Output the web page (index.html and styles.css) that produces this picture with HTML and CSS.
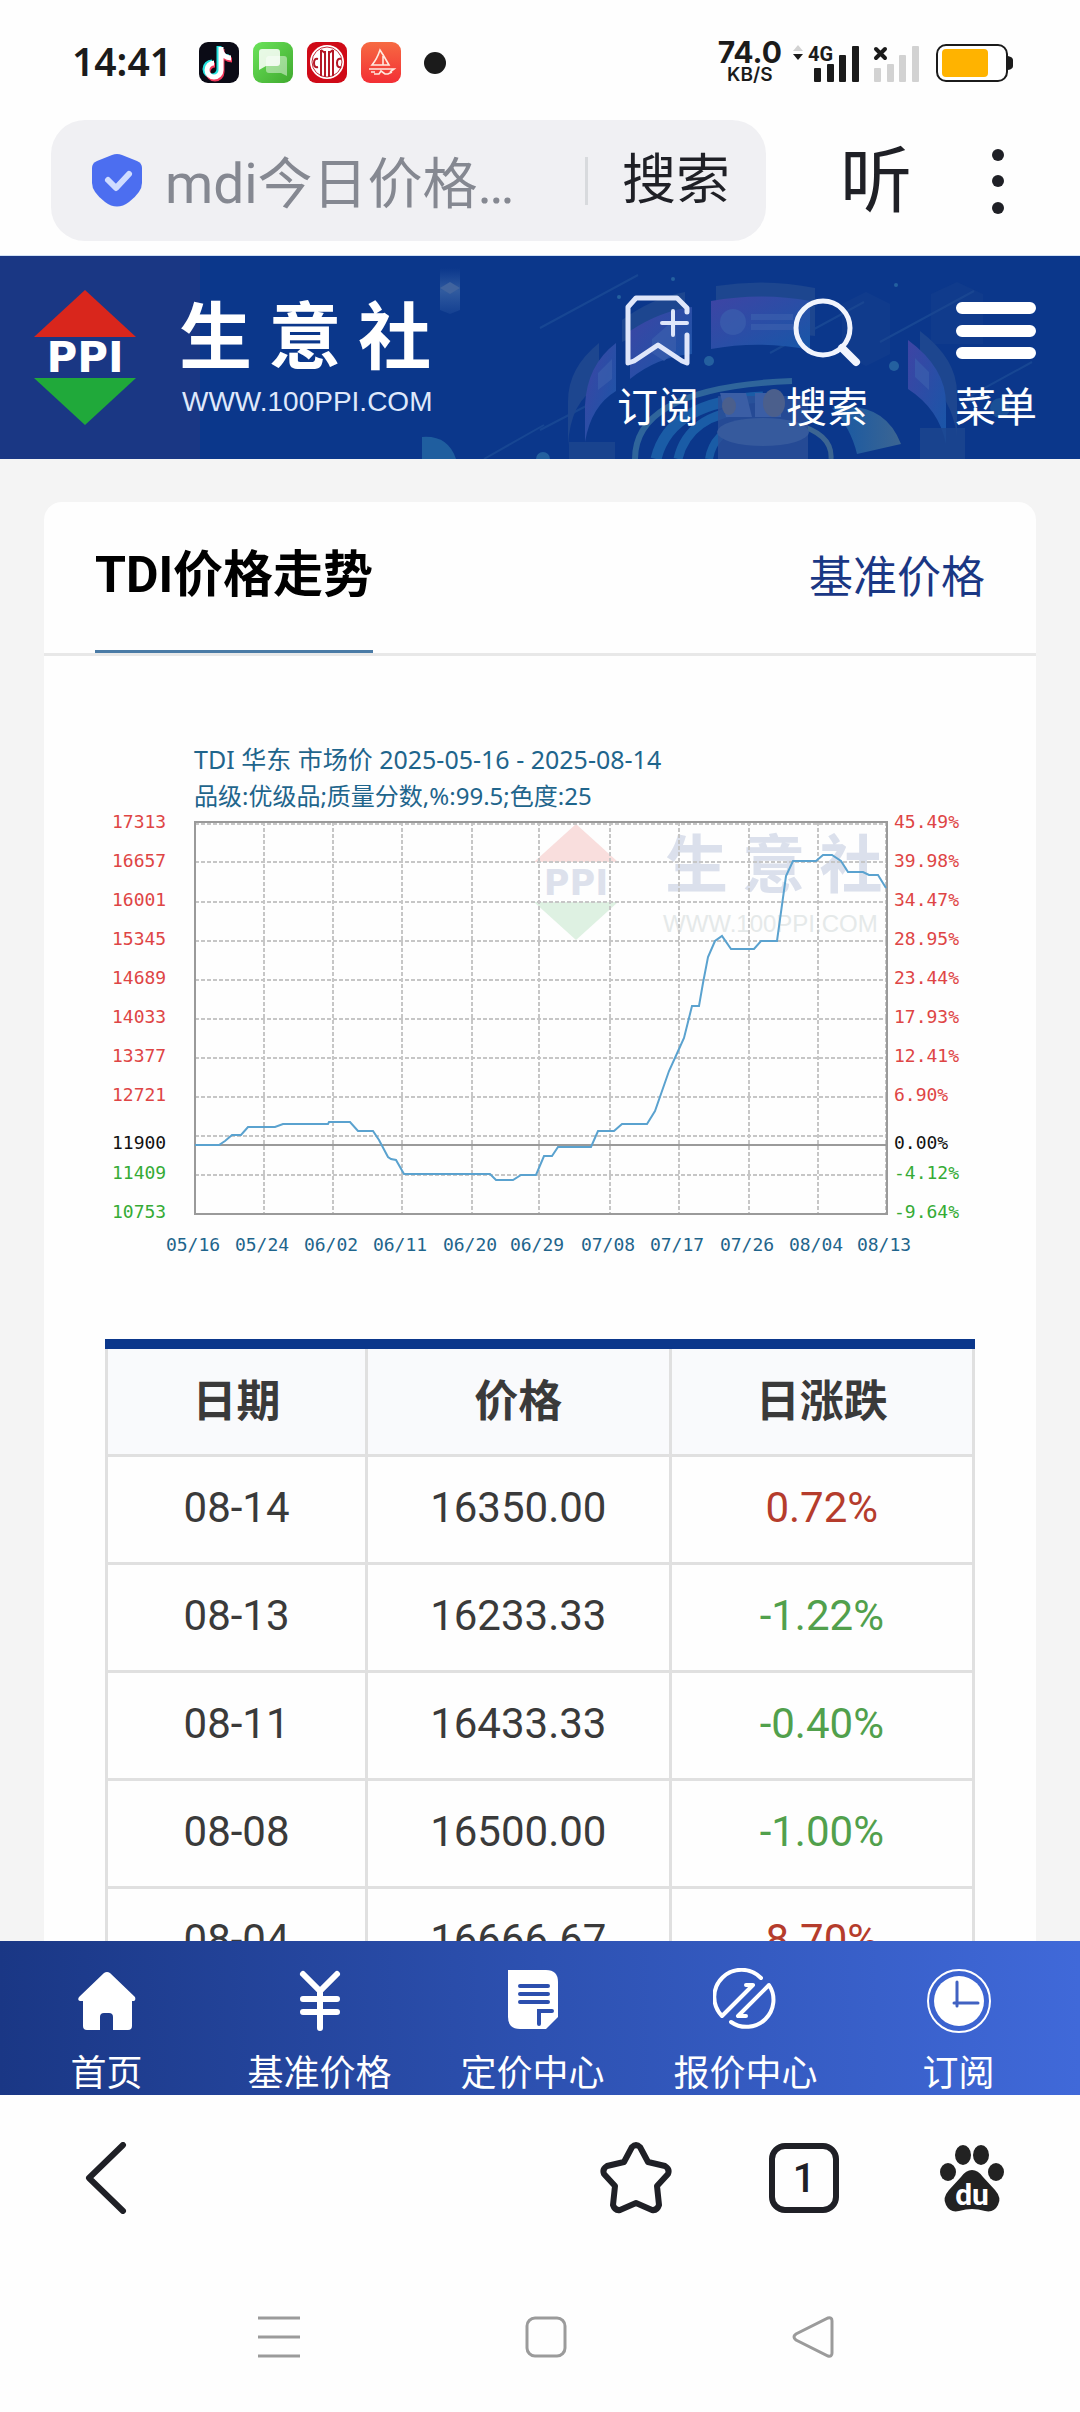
FILE: index.html
```html
<!DOCTYPE html>
<html lang="zh-CN">
<head>
  <meta charset="UTF-8" />
  <meta name="viewport" content="width=device-width, initial-scale=1.0"/>
  <title>TDI价格走势 - 生意社</title>
  <link rel="stylesheet" href="styles.css">
</head>
<body>
  <!-- phone status bar -->
  <div class="status-bar">
    <span class="clock">14:41</span>
    <div class="app-icons">
      <svg class="app-icon" viewBox="0 0 40 41">
        <rect width="40" height="41" rx="9" fill="#0b0b16"/>
        <g fill="none" stroke-width="5">
          <path d="M21 5v23a7 7 0 1 1-7-7M21 8c1 5 5 8 10 8" stroke="#25e3e0" transform="translate(-1 -1)"/>
          <path d="M21 5v23a7 7 0 1 1-7-7M21 8c1 5 5 8 10 8" stroke="#f2385a" transform="translate(2 2)"/>
          <path d="M21 5v23a7 7 0 1 1-7-7M21 8c1 5 5 8 10 8" stroke="#fff" transform="translate(1 0)"/>
        </g>
      </svg>
      <svg class="app-icon" viewBox="0 0 40 41">
        <defs><linearGradient id="msg" x1="0" y1="0" x2="1" y2="1"><stop offset="0" stop-color="#6be35a"/><stop offset="1" stop-color="#3fa92e"/></linearGradient></defs>
        <rect width="40" height="41" rx="9" fill="url(#msg)"/>
        <path d="M15 14h16q3 0 3 3v17l-6-3H16q-3 0-3-3V16z" fill="#fff" opacity=".45"/>
        <path d="M9 7h15q3 0 3 3v11q0 3-3 3H13l-7 4V10q0-3 3-3z" fill="#fff" opacity=".85"/>
      </svg>
      <svg class="app-icon" viewBox="0 0 40 41">
        <rect width="40" height="41" rx="9" fill="#cf0a17"/>
        <circle cx="20" cy="20" r="17" fill="#fff"/>
        <circle cx="20" cy="20" r="15" fill="none" stroke="#c2303c" stroke-width="1"/>
        <g fill="none" stroke="#b51826" stroke-width="2">
          <path d="M14 8v26M18 9v26M22 9v26M26 8v26M14 8l4 3M26 8l-4 3"/>
          <path d="M11 17q-4-1-4 4t4 4M34 17q-4-1-4 4t4 4"/>
        </g>
      </svg>
      <svg class="app-icon" viewBox="0 0 40 41">
        <defs><linearGradient id="sail" x1="0" y1="0" x2="0" y2="1"><stop offset="0" stop-color="#f66a42"/><stop offset="1" stop-color="#f32f35"/></linearGradient></defs>
        <rect width="40" height="41" rx="9" fill="url(#sail)"/>
        <path d="M19 8q-3 9-8 15h17q-5-9-9-15zM22 12v11M8 27h25l-4 3M10 30h4M13 32h5l2-3 4 3h3l4-2" fill="none" stroke="#ffe9df" stroke-width="1.6"/>
      </svg>
    </div>
    <span class="more-dot"></span>
    <div class="net-speed"><b>74.0</b><span>KB/S</span></div>
    <svg class="signal" viewBox="0 0 128 40">
      <path d="M0 8l5-6 5 6z" fill="#d2d2d2"/>
      <path d="M0 11h10l-5 6z" fill="#1b1b1b"/>
      <text x="15" y="18" class="signal-text">4G</text>
      <g fill="#1b1b1b">
        <rect x="21" y="25" width="7" height="14" rx="1"/><rect x="34" y="21" width="7" height="18" rx="1"/>
        <rect x="46" y="12" width="7" height="27" rx="1"/><rect x="59" y="3" width="7" height="36" rx="1"/>
      </g>
      <path d="M83 6l9 9M92 6l-9 9" stroke="#1b1b1b" stroke-width="4" stroke-linecap="round"/>
      <g fill="#d2d2d2">
        <rect x="81" y="25" width="7" height="14" rx="1"/><rect x="94" y="21" width="7" height="18" rx="1"/>
        <rect x="106" y="12" width="7" height="27" rx="1"/><rect x="119" y="3" width="7" height="36" rx="1"/>
      </g>
    </svg>
    <svg class="battery" viewBox="0 0 78 38">
      <rect x="1" y="1" width="70" height="36" rx="9" fill="#fff" stroke="#1b1b1b" stroke-width="2"/>
      <rect x="6" y="5" width="46" height="28" rx="4" fill="#ffb300"/>
      <path d="M72 12q5 1 5 4v6q0 3-5 4z" fill="#1b1b1b"/>
    </svg>
  </div>

  <!-- browser address bar -->
  <div class="address-bar">
    <form class="search-box">
      <svg class="shield" viewBox="0 0 52 56">
        <path d="M21 2q5-2 10 0l15 6q5 2 5 7v15q0 9-13 19-12 9-24 0Q1 39 1 30V15q0-5 5-7z" fill="#4c6ef0"/>
        <path d="M17 27l8 8 13-14" fill="none" stroke="#cfdcff" stroke-width="6" stroke-linecap="round" stroke-linejoin="round"/>
      </svg>
      <input class="search-input" type="text" aria-label="搜索内容" value="mdi今日价格…">
      <button class="search-btn" type="button">搜索</button>
    </form>
    <button class="listen-btn" type="button">听</button>
    <button class="dots-btn" type="button" aria-label="更多">
      <svg viewBox="0 0 12 66"><circle cx="6" cy="7" r="6"/><circle cx="6" cy="33" r="6"/><circle cx="6" cy="60" r="6"/></svg>
    </button>
  </div>

  <header class="site-header">
    <svg class="header-art" viewBox="0 0 1080 203" preserveAspectRatio="xMaxYMid slice">
      <defs>
        <linearGradient id="panel" x1="0" y1="0" x2="1" y2="1"><stop offset="0" stop-color="#3e44a4"/><stop offset="1" stop-color="#1757a8"/></linearGradient>
        <linearGradient id="teal" x1="0" y1="0" x2="1" y2="0"><stop offset="0" stop-color="#1558a5"/><stop offset="1" stop-color="#3c6592"/></linearGradient>
        <linearGradient id="pillar" x1="0" y1="0" x2="0" y2="1"><stop offset="0" stop-color="#2b56a0" stop-opacity="0"/><stop offset=".5" stop-color="#315b9f"/><stop offset="1" stop-color="#2b56a0" stop-opacity=".3"/></linearGradient>
      </defs>
      <path d="M440 12h20v42l-10 4-10-4z" fill="url(#pillar)"/>
      <path d="M440 32l10-6 10 6-10 6z" fill="#41649f"/>
      <path d="M422 181q26-2 34 22h-34z" fill="#1f5e9f"/>
      <g stroke="#24569b" stroke-width="2" opacity=".5">
        <path d="M484 203l60-34M540 72l98-53M540 174l50-26M770 97l94-51M880 86l94-51M970 140l62-34"/>
      </g>
      <g fill="#1d468f">
        <path d="M599 87q-31 25-31 58v45q2-45 31-60z"/>
        <path d="M716 30q50-8 99 2v48l-99-10z"/>
        <path d="M920 75q37 28 37 62v44q-5-42-37-62z"/>
        <path d="M622 64q30-22 63-28v20l-63 30z"/>
        <path d="M842 48l24-12 24 12v50l-24 12-24-12z" opacity=".3"/>
        <path d="M931 38l26-12 26 12v50h-52z" opacity=".3"/>
      </g>
      <g fill="url(#panel)">
        <path d="M616 87q-29 22-31 62v37q6-36 31-51z"/>
        <path d="M711 45q50-9 99 0v49q-50-10-99-1z"/>
        <path d="M630 75q30-20 62-24v47q-35 3-62 25z"/>
        <path d="M908 84q38 28 38 64v40q-7-35-38-55z"/>
      </g>
      <g fill="#3b5fae" opacity=".7">
        <circle cx="733" cy="66" r="13"/><path d="M751 58h42v6h-42zM751 68h42v6h-42z"/>
        <path d="M598 117l14-14v20l-14 11zM915 102l14 14v18l-14-13zM652 97v-14l16-14h8v26l-12 10z"/>
      </g>
      <g fill="none" stroke="#1a5ca6">
        <path d="M635 203q0-72 157-78" stroke="#2f659b" stroke-width="6"/>
        <path d="M656 203q14-58 107-62" stroke-width="11"/>
        <path d="M678 203q10-44 70-50" stroke-width="9"/>
        <path d="M709 203q4-26 34-36" stroke-width="8"/>
        <path d="M795 168q38 10 36 35" stroke="#3c6592" stroke-width="5"/>
      </g>
      <path d="M832 152q52-8 69 36l-44 10q-6-26-25-46z" fill="url(#teal)"/>
      <path d="M718 140h90v63h-90z" fill="#2c4f97" opacity=".8"/>
      <ellipse cx="763" cy="176" rx="46" ry="14" fill="#365a9d"/>
      <path d="M720 137h26l6 24h-26zM755 137h26v24h-26z" fill="#3b5ea5"/>
      <ellipse cx="729" cy="150" rx="7" ry="9" fill="#4b5f8c"/>
      <ellipse cx="774" cy="147" rx="11" ry="14" fill="#4b5f8c"/>
      <g fill="#24609f">
        <circle cx="709" cy="105" r="5"/><circle cx="894" cy="110" r="5"/><circle cx="1000" cy="152" r="10" opacity=".6"/>
        <circle cx="673" cy="23" r="2"/><circle cx="619" cy="41" r="2"/><circle cx="896" cy="29" r="2"/><circle cx="543" cy="203" r="7"/>
      </g>
      <path d="M569 186h46v17h-46zM920 172h45v31h-45z" fill="#1d468f" opacity=".8"/>
    </svg>
    <a class="brand" href="#">
      <span class="brand-mark">
        <svg viewBox="0 0 102 47"><path d="M51 0l51 47H0z" fill="#d9261c"/></svg>
        <b>PPI</b>
        <svg viewBox="0 0 102 47"><path d="M0 0h102L51 47z" fill="#20a93a"/></svg>
      </span>
      <span class="brand-text"><strong>生 意 社</strong><small>WWW.100PPI.COM</small></span>
    </a>
    <nav class="header-nav">
      <a href="#">
        <svg viewBox="0 0 84 74" fill="none" stroke="#dfe6fa" stroke-width="5" stroke-linecap="round" stroke-linejoin="round">
          <path d="M71 18v-4L61 4H20l-8 9v56l6-2 24-16 24 16 5 2V41"/><path d="M46 29h25M57 17v24" stroke-width="4"/>
        </svg>
        订阅
      </a>
      <a href="#">
        <svg viewBox="0 0 84 74" fill="none" stroke="#f1f4fd" stroke-width="5" stroke-linecap="round">
          <circle cx="38" cy="34" r="27"/><path d="M57 54l14 14" stroke-width="8"/>
        </svg>
        搜索
      </a>
      <a href="#">
        <svg viewBox="0 0 84 74" stroke="#fff" stroke-width="12" stroke-linecap="round"><path d="M8 14h68M8 37h68M8 59h68"/></svg>
        菜单
      </a>
    </nav>
  </header>

  <main class="content">
    <section class="card">
      <div class="card-head">
        <h1>TDI价格走势</h1>
        <a href="#">基准价格</a>
      </div>

      <svg class="chart" viewBox="0 0 870 540">
        <!-- watermark -->
        <path d="M471 94l42 38h-84z" fill="#f9dedd"/>
        <path d="M429 172h84l-42 38z" fill="#def1e2"/>
        <text x="471" y="165" class="wm-ppi">PPI</text>
        <text x="560" y="157" class="wm-name">生 意 社</text>
        <text x="558" y="202" class="wm-url">WWW.100PPI.COM</text>

        <g class="grid">
          <path d="M159 92v392M228 92v392M297 92v392M367 92v392M434 92v392M505 92v392M574 92v392M644 92v392M713 92v392M781 92v392"/>
          <path d="M90 94h692M90 132h692M90 172h692M90 211h692M90 250h692M90 289h692M90 328h692M90 367h692M90 406h692M90 445h692"/>
        </g>
        <rect x="90" y="92" width="692" height="392" class="frame"/>
        <path d="M90 415h692" class="frame"/>
        <polyline class="price-line" points="90,415 114,415 120,411 127,405 136,405 143,397 170,397 178,394 223,394 224,392 245,392 253,401 268,401 274,410 283,427 286,429 291,430 299,444 385,444 391,450 408,450 416,445 431,445 439,426 447,426 453,417 486,417 493,401 509,401 517,394 542,394 550,381 564,341 574,319 579,308 587,276 594,276 598,253 603,227 610,211 617,206 626,219 649,219 656,211 672,211 681,146 688,131 711,131 718,125 727,125 736,131 743,142 758,142 764,145 773,145 781,158"/>

        <text x="89" y="39" class="caption">TDI 华东 市场价 2025-05-16 - 2025-08-14</text>
        <text x="89" y="75" class="caption spec">品级:优级品;质量分数,%:99.5;色度:25</text>
        <g class="axis up">
          <text x="7" y="98">17313</text><text x="7" y="137">16657</text><text x="7" y="176">16001</text><text x="7" y="215">15345</text>
          <text x="7" y="254">14689</text><text x="7" y="293">14033</text><text x="7" y="332">13377</text><text x="7" y="371">12721</text>
          <text x="789" y="98">45.49%</text><text x="789" y="137">39.98%</text><text x="789" y="176">34.47%</text><text x="789" y="215">28.95%</text>
          <text x="789" y="254">23.44%</text><text x="789" y="293">17.93%</text><text x="789" y="332">12.41%</text><text x="789" y="371">6.90%</text>
        </g>
        <g class="axis zero"><text x="7" y="419">11900</text><text x="789" y="419">0.00%</text></g>
        <g class="axis down">
          <text x="7" y="449">11409</text><text x="7" y="488">10753</text>
          <text x="789" y="449">-4.12%</text><text x="789" y="488">-9.64%</text>
        </g>
        <g class="axis dates">
          <text x="88" y="521">05/16</text><text x="157" y="521">05/24</text><text x="226" y="521">06/02</text><text x="295" y="521">06/11</text>
          <text x="365" y="521">06/20</text><text x="432" y="521">06/29</text><text x="503" y="521">07/08</text><text x="572" y="521">07/17</text>
          <text x="642" y="521">07/26</text><text x="711" y="521">08/04</text><text x="779" y="521">08/13</text>
        </g>
      </svg>

      <table class="price-table">
        <thead>
          <tr><th class="date-col">日期</th><th>价格</th><th>日涨跌</th></tr>
        </thead>
        <tbody>
          <tr><td>08-14</td><td>16350.00</td><td class="rise">0.72%</td></tr>
          <tr><td>08-13</td><td>16233.33</td><td class="fall">-1.22%</td></tr>
          <tr><td>08-11</td><td>16433.33</td><td class="fall">-0.40%</td></tr>
          <tr><td>08-08</td><td>16500.00</td><td class="fall">-1.00%</td></tr>
          <tr><td>08-04</td><td>16666.67</td><td class="rise">8.70%</td></tr>
        </tbody>
      </table>
    </section>
  </main>

  <nav class="tab-bar">
    <a href="#">
      <svg viewBox="0 0 66 66" fill="#fff">
        <path d="M30 5q3-2 6 0l25 24q1 3-1 4h-2v25q0 4-4 4H39V49q0-4-4-4h-5q-4 0-4 4v13H13q-4 0-4-4V33H6q-3-1-1-4z"/>
      </svg>
      首页
    </a>
    <a href="#">
      <svg viewBox="0 0 66 66" fill="none" stroke="#fff" stroke-width="6" stroke-linecap="round">
        <path d="M16 6l17 17L50 6M33 23v37M16 31h34M16 44h34"/>
      </svg>
      基准价格
    </a>
    <a href="#">
      <svg viewBox="0 0 66 66">
        <path d="M8 2h38q12 0 12 12v35L46 61H20Q8 61 8 49z" fill="#fff"/>
        <path d="M20 18h28M20 26h28M20 34h28M39 56V43h13" fill="none" stroke="#2c4fae" stroke-width="4" stroke-linecap="round"/>
      </svg>
      定价中心
    </a>
    <a href="#">
      <svg viewBox="0 0 66 66" fill="none" stroke="#fff" stroke-width="4" stroke-linecap="round" stroke-linejoin="round">
        <path d="M48 10A27 27 0 0 0 9 48L40 17H33"/><path d="M18 54A27 27 0 0 0 56 17L25 48H33"/>
      </svg>
      报价中心
    </a>
    <a href="#">
      <svg viewBox="0 0 66 66">
        <circle cx="33" cy="33" r="31" fill="none" stroke="#fff" stroke-width="2"/>
        <circle cx="33" cy="33" r="25" fill="#fff"/>
        <path d="M31 14v24M28 35h24" stroke="#4162c2" stroke-width="3" stroke-linecap="round"/>
      </svg>
      订阅
    </a>
  </nav>

  <!-- browser toolbar -->
  <div class="toolbar">
    <button class="back" type="button" aria-label="返回">
      <svg viewBox="0 0 72 72" fill="none" stroke="#1f2026" stroke-width="6" stroke-linecap="round" stroke-linejoin="round"><path d="M51 3L17 36l34 33"/></svg>
    </button>
    <button type="button" aria-label="收藏">
      <svg viewBox="0 0 72 72" fill="none" stroke="#1f2026" stroke-width="6" stroke-linejoin="round">
        <path d="M32 5q4-4 8 0l8 15 17 4q5 3 3 8L57 44l2 19q-2 6-7 5L36 61 20 68q-5 1-7-5l2-19L4 32q-2-5 3-8l17-4z"/>
      </svg>
    </button>
    <button type="button" aria-label="标签页">
      <svg viewBox="0 0 72 72">
        <rect x="4" y="4" width="64" height="64" rx="13" fill="none" stroke="#1f2026" stroke-width="6"/>
        <text x="36" y="50" class="tab-count">1</text>
      </svg>
    </button>
    <button type="button" aria-label="百度">
      <svg viewBox="0 0 72 72" fill="#222">
        <ellipse cx="27" cy="13" rx="8" ry="10"/><ellipse cx="45" cy="13" rx="8" ry="10"/>
        <ellipse cx="12" cy="30" rx="8" ry="9"/><ellipse cx="60" cy="30" rx="8" ry="9"/>
        <path d="M36 28q6 0 11 7l12 13q7 8 3 15-4 8-13 6-7-2-13-2t-13 2q-9 2-13-6-4-7 3-15l12-13q5-7 11-7z"/>
        <text x="36" y="63" class="du">du</text>
      </svg>
    </button>
  </div>

  <!-- system navigation -->
  <div class="system-nav">
    <button type="button" aria-label="最近任务"><svg viewBox="0 0 42 42"><path d="M0 2h42M0 21h42M0 40h42"/></svg></button>
    <button type="button" aria-label="主屏幕"><svg viewBox="0 0 42 42"><rect x="2" y="2" width="38" height="38" rx="8"/></svg></button>
    <button type="button" aria-label="后退"><svg viewBox="0 0 42 42"><path d="M36 2q4-1 4 3v32q0 4-4 3L4 24q-4-3 0-6z"/></svg></button>
  </div>
</body>
</html>
```

FILE: styles.css
```css
:root {
  --blue: #0b378b;
  --navy: #1a3784;
  --ink: #1f2026;
  --text: #3a3a3a;
  --line: #e0e0e0;
  --red: #b53c2c;
  --green: #51a04c;
}

* {
  box-sizing: border-box;
}

body {
  margin: 0;
  height: 100vh;
  display: flex;
  flex-direction: column;
  overflow: hidden;
  font-family: Roboto, "Noto Sans CJK SC", sans-serif;
  color: var(--text);
  background: #fefefe;
}

a {
  color: inherit;
  text-decoration: none;
}

button {
  padding: 0;
  border: none;
  background: none;
  font-family: inherit;
  color: var(--ink);
  cursor: pointer;
}

svg {
  display: block;
  flex: none;
}

/* status bar */
.status-bar {
  height: 120px;
  padding: 5px 66px 0 72px;
  display: flex;
  align-items: center;
}

.clock {
  font: 600 39px/44px "Noto Sans", sans-serif;
  padding-bottom: 3px;
  color: #1b1b1b;
}

.app-icons {
  display: flex;
  gap: 14px;
  margin-left: 27px;
}

.app-icon {
  width: 40px;
  height: 41px;
}

.more-dot {
  width: 22px;
  height: 22px;
  margin-left: 23px;
  border-radius: 50%;
  background: #1b1b1b;
}

.net-speed {
  margin-left: auto;
  margin-right: 11px;
  display: flex;
  flex-direction: column;
  align-items: center;
  font-family: Inter, sans-serif;
  color: #1b1b1b;
}

.net-speed b {
  font-size: 30px;
  line-height: 25px;
}

.net-speed span {
  font-size: 19px;
  font-weight: 600;
  line-height: 20px;
}

.signal {
  width: 128px;
  height: 40px;
  margin-right: 15px;
}

.signal-text {
  font: 700 20px Roboto, sans-serif;
  fill: #1b1b1b;
}

.battery {
  width: 78px;
  height: 38px;
}

/* address bar */
.address-bar {
  height: 136px;
  padding: 0 48px 14px 51px;
  display: flex;
  align-items: stretch;
  border-bottom: 1px solid #d3e2f5;
}

.search-box {
  flex: 1;
  min-width: 0;
  padding: 0 36px 0 40px;
  display: flex;
  align-items: center;
  border-radius: 34px;
  background: #f0f0f3;
}

.shield {
  width: 52px;
  height: 56px;
}

.search-input {
  flex: 1;
  min-width: 0;
  margin-left: 22px;
  padding: 0 0 4px;
  border: none;
  outline: none;
  background: none;
  font: 55px Roboto, "Noto Sans CJK SC", sans-serif;
  color: #858891;
}

.search-btn {
  height: 48px;
  padding-left: 34px;
  border-left: 3px solid #d8dadd;
  font-size: 54px;
  line-height: 48px;
}

.listen-btn {
  width: 110px;
  margin-left: 55px;
  padding-top: 3px;
  font-size: 72px;
  line-height: 72px;
}

.dots-btn {
  width: 68px;
  margin-left: 33px;
  display: flex;
  align-items: center;
  justify-content: center;
}

.dots-btn svg {
  width: 12px;
  height: 66px;
  fill: var(--ink);
}

/* site header */
.site-header {
  position: relative;
  height: 203px;
  flex: none;
  padding: 0 42px 0 34px;
  display: flex;
  justify-content: space-between;
  background: linear-gradient(90deg, var(--navy) 200px, var(--blue) 200px);
  color: #fff;
}

.header-art {
  position: absolute;
  inset: 0;
  width: 100%;
  height: 100%;
}

.brand,
.header-nav {
  position: relative;
  display: flex;
}

.brand {
  align-items: center;
  gap: 43px;
}

.brand-mark {
  width: 102px;
  display: flex;
  flex-direction: column;
  align-items: center;
}

.brand-mark svg {
  width: 102px;
  height: 47px;
}

.brand-mark b {
  font: 700 42px/41px "DejaVu Sans", sans-serif;
}

.brand-text {
  padding-top: 3px;
  display: flex;
  flex-direction: column;
}

.brand-text strong {
  font: 700 73px/86px "Noto Sans CJK SC", sans-serif;
}

.brand-text small {
  margin-left: 3px;
  font: 28px/56px "Liberation Sans", sans-serif;
  color: #dfe8fb;
}

.header-nav {
  gap: 85px;
}

.header-nav a {
  width: 84px;
  padding-top: 38px;
  display: flex;
  flex-direction: column;
  align-items: center;
  gap: 10px;
  font-size: 41px;
  line-height: 60px;
  white-space: nowrap;
}

.header-nav svg {
  width: 84px;
  height: 74px;
}

/* trend card */
.content {
  flex: 1;
  min-height: 0;
  overflow: hidden;
  padding: 43px 44px 0;
  background: #f4f4f4;
}

.card {
  border-radius: 18px;
  background: #fefefe;
}

.card-head {
  height: 154px;
  padding: 0 51px;
  display: flex;
  justify-content: space-between;
  border-bottom: 3px solid #e8e8e8;
}

.card-head h1 {
  margin: 0;
  border-bottom: 3px solid #4a7ba6;
  font-size: 50px;
  line-height: 146px;
  color: #000;
}

.card-head a {
  font-size: 44px;
  line-height: 152px;
  color: var(--navy);
}

.chart {
  width: 100%;
  padding: 74px 61px 69px;
}

.grid {
  fill: none;
  stroke: #c6c6c6;
  stroke-width: 2;
  stroke-dasharray: 4 2;
}

.frame {
  fill: none;
  stroke: #9a9a9a;
  stroke-width: 2;
}

.price-line {
  fill: none;
  stroke: #5aa2cf;
  stroke-width: 2;
}

.caption {
  font: 25px "Noto Sans", "Noto Sans CJK SC", sans-serif;
  fill: #1f658c;
}

.spec {
  font-size: 24px;
}

.axis {
  font: 18px "DejaVu Sans Mono", monospace;
}

.up {
  fill: #de4545;
}

.zero {
  fill: #111;
}

.down {
  fill: #35ab35;
}

.dates {
  fill: #1f658c;
  text-anchor: middle;
}

.wm-ppi {
  font: 700 35px "DejaVu Sans", sans-serif;
  fill: #dde1ec;
  text-anchor: middle;
}

.wm-name {
  font: 700 63px "Noto Sans CJK SC", sans-serif;
  fill: #dbe0ec;
}

.wm-url {
  font: 24px "Liberation Sans", sans-serif;
  fill: #e5e9e9;
}

/* price table */
.price-table {
  width: calc(100% - 122px);
  margin: 0 61px;
  table-layout: fixed;
  border-collapse: collapse;
  text-align: center;
}

.price-table th,
.price-table td {
  height: 108px;
  padding: 0 0 3px;
  border: 3px solid var(--line);
}

.price-table th {
  height: 111px;
  padding-bottom: 6px;
  border-top: 10px solid var(--blue);
  background: #f9fafc;
  font-size: 44px;
}

.price-table td {
  font-size: 42px;
}

.date-col {
  width: 30%;
}

.price-table .rise {
  color: var(--red);
}

.price-table .fall {
  color: var(--green);
}

/* site tab bar */
.tab-bar {
  height: 154px;
  flex: none;
  padding: 27px 15px 0 0;
  display: flex;
  background: linear-gradient(90deg, #1a3785, #2d51b1 50%, #4069d9);
  color: #fff;
}

.tab-bar a {
  flex: 1;
  display: flex;
  flex-direction: column;
  align-items: center;
  gap: 19px;
  font-size: 36px;
  line-height: 42px;
}

.tab-bar svg {
  width: 66px;
  height: 66px;
}

/* browser toolbar */
.toolbar {
  height: 166px;
  flex: none;
  padding: 0 24px;
  display: flex;
}

.toolbar button {
  width: 168px;
  display: flex;
  align-items: center;
  justify-content: center;
}

.toolbar .back {
  margin-right: auto;
}

.toolbar svg {
  width: 72px;
  height: 72px;
}

.tab-count {
  font: 500 40px Roboto, sans-serif;
  fill: var(--ink);
  text-anchor: middle;
}

.du {
  font: 700 30px Roboto, sans-serif;
  fill: #fff;
  text-anchor: middle;
}

/* system navigation */
.system-nav {
  height: 151px;
  flex: none;
  padding: 0 133px 0 145px;
  display: flex;
}

.system-nav button {
  flex: 1;
  display: flex;
  align-items: center;
  justify-content: center;
}

.system-nav svg {
  width: 42px;
  height: 42px;
  fill: none;
  stroke: #9b9b9b;
  stroke-width: 3;
}
```
